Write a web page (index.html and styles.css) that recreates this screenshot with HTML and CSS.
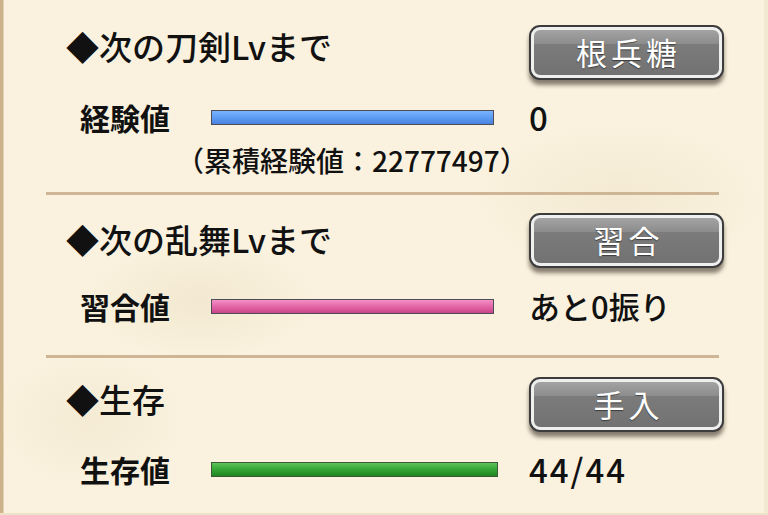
FILE: index.html
```html
<!DOCTYPE html>
<html lang="ja">
<head>
<meta charset="utf-8">
<title>Status</title>
<link rel="stylesheet" href="styles.css">
</head>
<body>
<div class="page">
  <section class="sec sec1">
    <div class="head">
      <h2 class="title t1">◆次の刀剣Lvまで</h2>
      <div class="btn"><div class="btn-in">根兵糖</div></div>
    </div>
    <div class="stat">
      <span class="label">経験値</span>
      <span class="bar blue"></span>
      <span class="value num">0</span>
    </div>
    <div class="sub">（累積経験値：22777497）</div>
  </section>
  <hr class="divider d1">
  <section class="sec sec2">
    <div class="head">
      <h2 class="title t2">◆次の乱舞Lvまで</h2>
      <div class="btn"><div class="btn-in">習合</div></div>
    </div>
    <div class="stat">
      <span class="label">習合値</span>
      <span class="bar pink"></span>
      <span class="value">あと0振り</span>
    </div>
  </section>
  <hr class="divider d2">
  <section class="sec sec3">
    <div class="head">
      <h2 class="title t3">◆生存</h2>
      <div class="btn"><div class="btn-in">手入</div></div>
    </div>
    <div class="stat">
      <span class="label">生存値</span>
      <span class="bar green"></span>
      <span class="value num">44/44</span>
    </div>
  </section>
</div>
</body>
</html>
```

FILE: styles.css
```css
html, body {
  margin: 0;
  padding: 0;
}
body {
  width: 768px;
  height: 515px;
  overflow: hidden;
  font-family: "Noto Sans CJK JP", "Noto Sans", sans-serif;
  color: #111;
  background: #f9f0dc;
}
.page {
  height: 513px;
  border-bottom: 2px solid #ece2c8;
  background:
    radial-gradient(ellipse 120px 60px at 200px 300px, rgba(230,215,185,0.35), transparent),
    radial-gradient(ellipse 150px 80px at 620px 200px, rgba(230,215,185,0.3), transparent),
    radial-gradient(ellipse 100px 70px at 90px 420px, rgba(235,222,195,0.35), transparent),
    #faf2de;
  box-shadow: inset 3px 0 0 #cdb38c, inset 4px 0 0 #e2d2b0, inset -4px 0 0 #f3e8d0;
}
.sec {
  display: flex;
  flex-direction: column;
}
.sec1 { padding-top: 25px; }
.head {
  display: flex;
  align-items: flex-start;
  height: 57px;
  padding-left: 66px;
}
.title {
  margin: 0;
  font-size: 33px;
  font-weight: 500;
  line-height: 40px;
  width: 463px;
  letter-spacing: 0;
}
.t1 { margin-top: 1px; }
.t2 { margin-top: 6px; }
.t3 { margin-top: 2px; }
.btn {
  width: 191px;
  height: 51px;
  padding: 2px;
  border-radius: 11px;
  background: #3c3c3c;
  box-shadow: 0 5px 4px rgba(40,30,20,0.55);
}
.btn-in {
  height: 45px;
  border: 3px solid #efefef;
  border-radius: 9px;
  background: linear-gradient(#a3a3a3 0%, #8d8d8d 30%, #7b7b7b 32%, #727272 100%);
  color: #fff;
  font-size: 31px;
  font-weight: 400;
  letter-spacing: 4px;
  text-indent: 4px;
  line-height: 44px;
  text-align: center;
  text-shadow: 0 1px 1px rgba(0,0,0,0.5);
}
.stat {
  display: flex;
  align-items: center;
  height: 40px;
  padding-left: 80px;
}
.sec1 .stat { margin-top: 15px; }
.sec2 .stat { margin-top: 16px; }
.sec3 .stat { margin-top: 15px; }
.label {
  width: 131px;
  font-size: 30px;
  font-weight: 600;
  line-height: 40px;
}
.bar {
  display: block;
  width: 281px;
  height: 13px;
  border: 1px solid #4d4d58;
  margin-right: 35px;
}
.blue {
  background: linear-gradient(#79b3fb 0%, #5f9ef5 45%, #4a83df 100%);
}
.pink {
  background: linear-gradient(#f490c4 0%, #e465a8 50%, #c94589 100%);
}
.green {
  width: 285px;
  margin-right: 31px;
  border-color: #3b5a3b;
  background: linear-gradient(#5cc35a 0%, #35a436 50%, #1f841f 100%);
}
.value {
  font-size: 31px;
  font-weight: 500;
  line-height: 40px;
}
.num {
  font-size: 33px;
  letter-spacing: 2px;
}
.sub {
  margin-top: 3px;
  padding-left: 176px;
  height: 40px;
  line-height: 40px;
  font-size: 28px;
  font-weight: 500;
}
.divider {
  border: 0;
  height: 3px;
  background: #cdb596;
  margin: 0 0 0 46px;
  width: 673px;
}
.d1 { margin-top: 12px; }
.d2 { margin-top: 29px; }
.sec2 .head { margin-top: 18px; }
.sec3 .head { margin-top: 19px; }
```
